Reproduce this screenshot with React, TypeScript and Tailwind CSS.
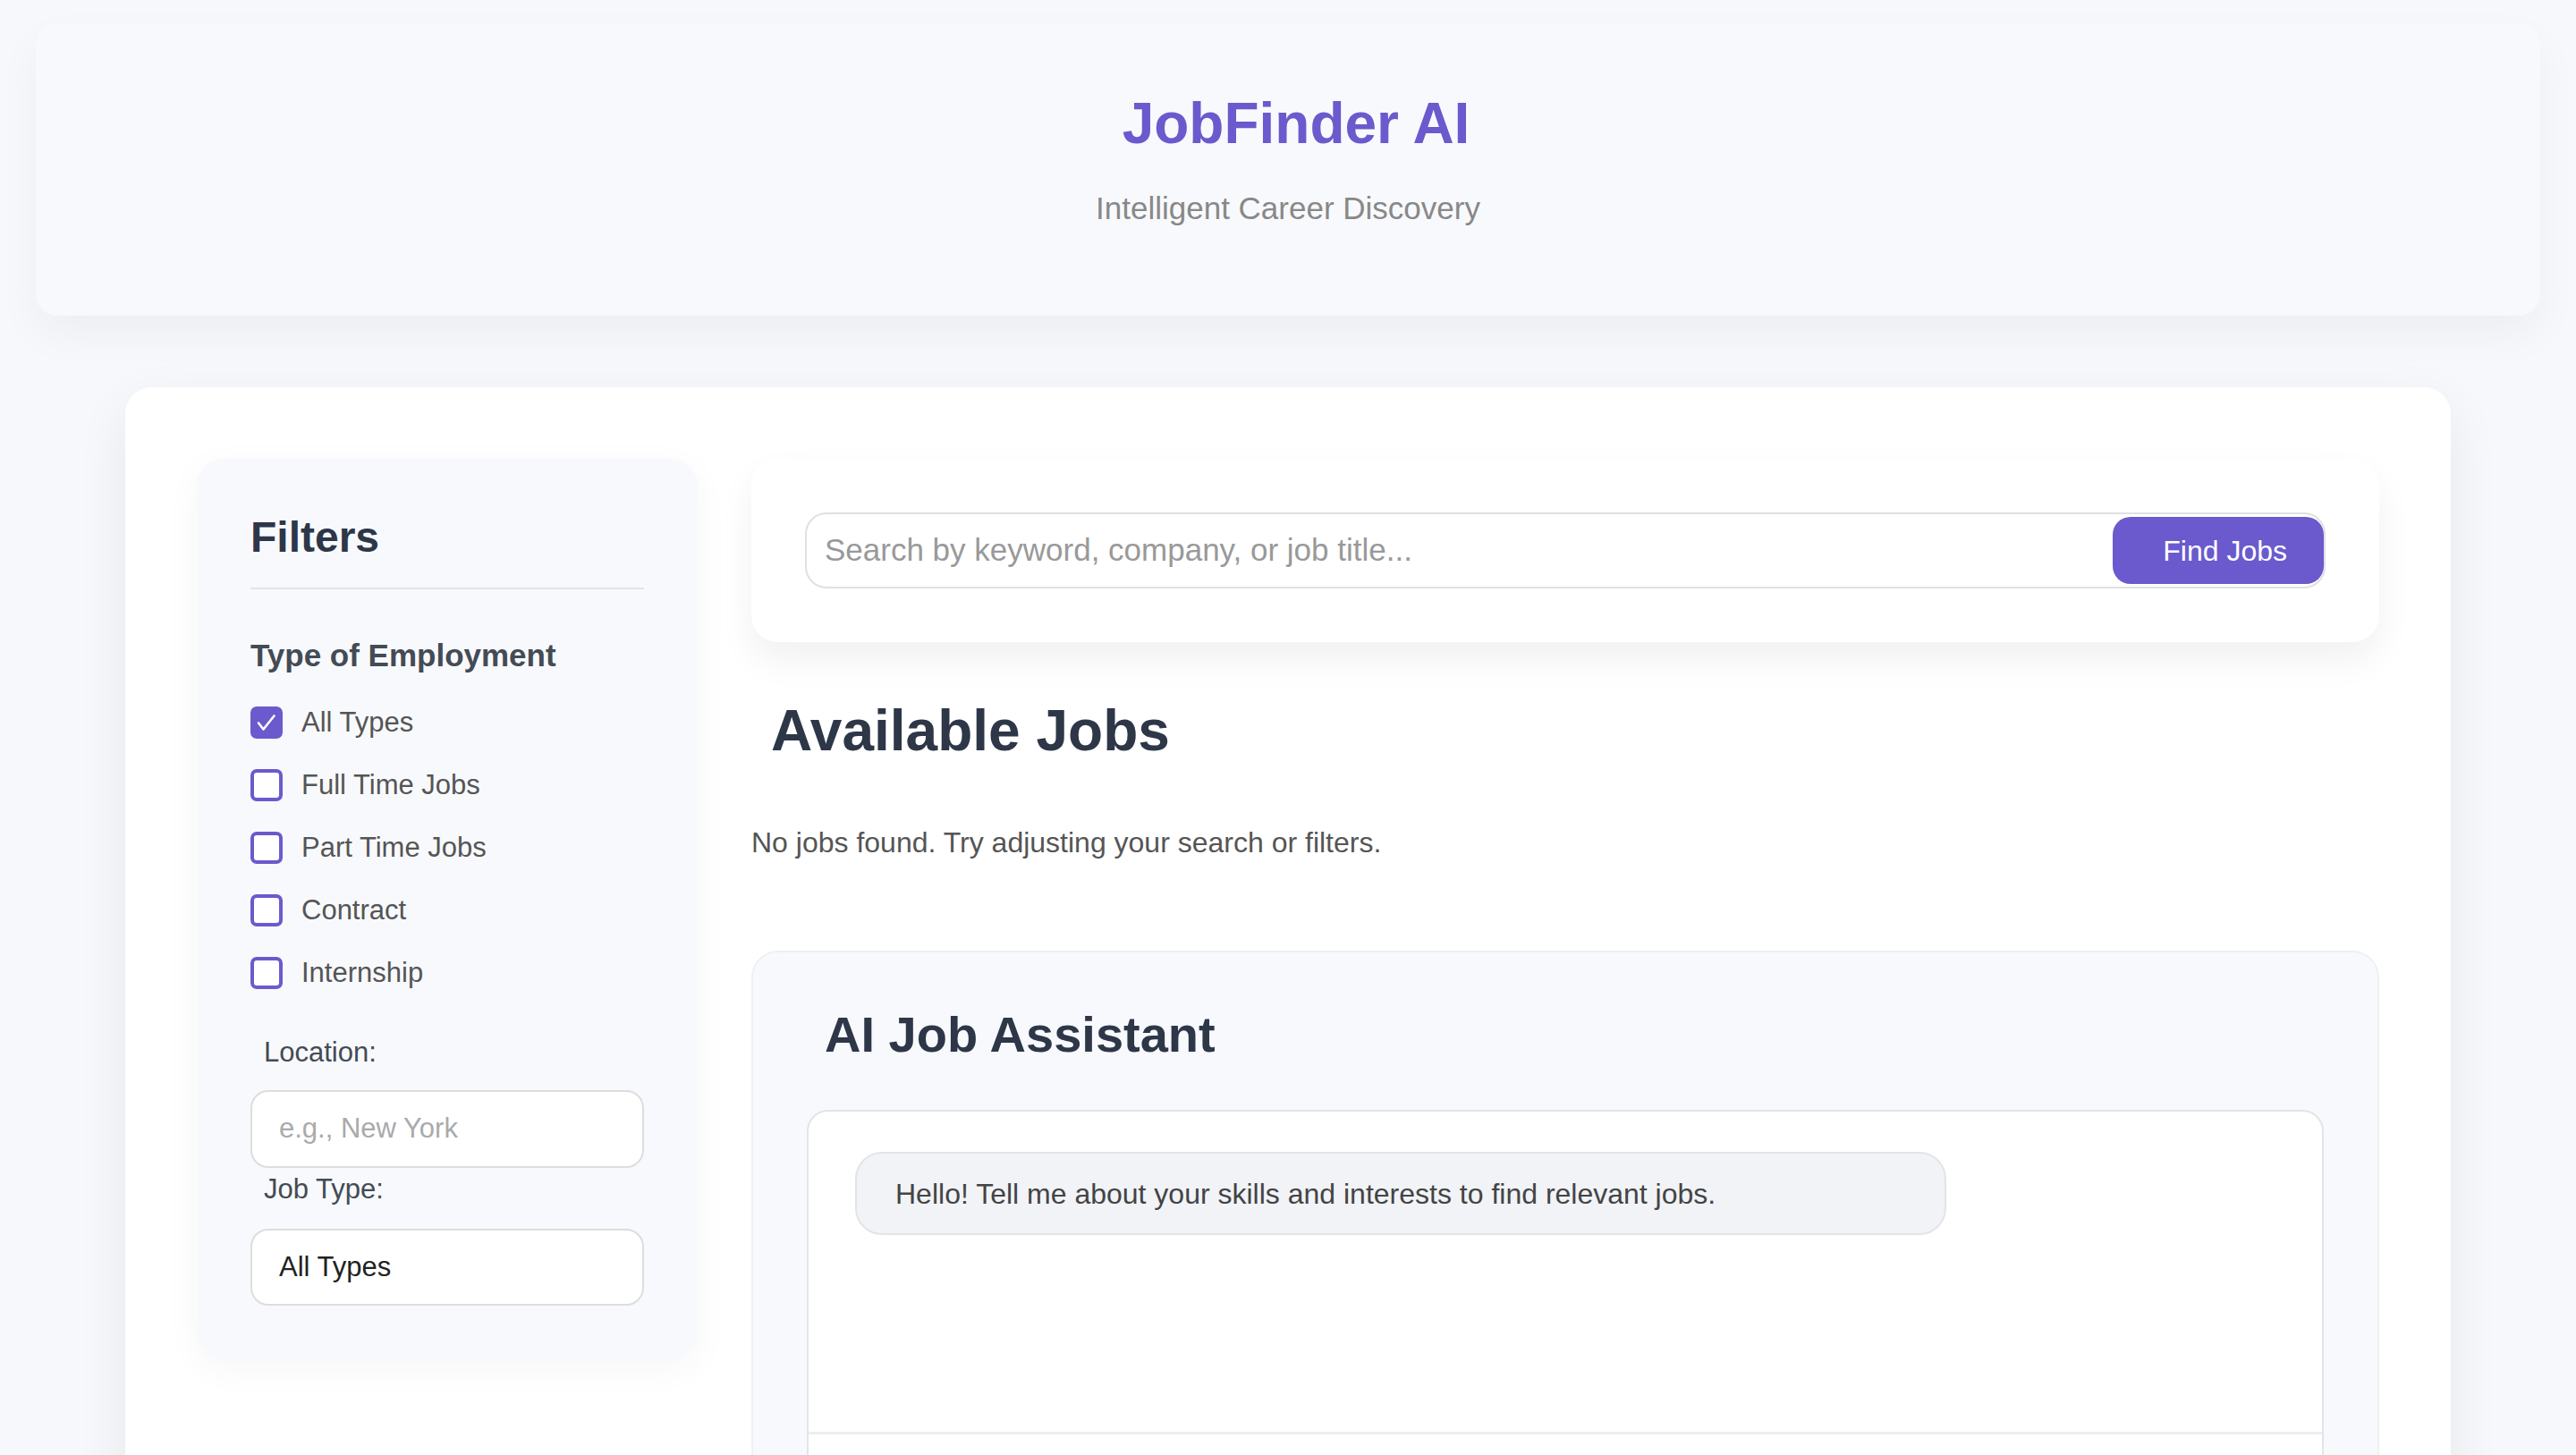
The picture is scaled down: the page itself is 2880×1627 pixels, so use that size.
import React from 'react';

const employmentTypes = [
    { label: 'All Types', checked: true },
    { label: 'Full Time Jobs', checked: false },
    { label: 'Part Time Jobs', checked: false },
    { label: 'Contract', checked: false },
    { label: 'Internship', checked: false },
];

function Checkbox({ checked }: { checked: boolean }) {
    if (checked) {
        return (
            <span className="w-[36px] h-[36px] rounded-[7px] bg-[#6a5acd] flex items-center justify-center shrink-0">
                <svg width="36" height="36" viewBox="0 0 36 36" fill="none" stroke="white" strokeWidth="2.6" strokeLinecap="round" strokeLinejoin="round">
                    <path d="M9 18.5l5.5 7L26.5 10.5" />
                </svg>
            </span>
        );
    }
    return <span className="w-[36px] h-[36px] rounded-[7px] border-[4px] border-[#6a5acd] bg-white shrink-0" />;
}

function Sidebar() {
    return (
        <aside className="w-[560px] shrink-0 bg-[#f8f9fc] rounded-[30px] p-[60px] shadow-[0_10px_40px_rgba(0,0,0,0.04)]">
            <h3 className="text-[48px] leading-[55px] font-bold text-[#2d3748] pb-[29px] border-b-2 border-[#e2e4e8]">Filters</h3>

            <h4 className="mt-[54px] text-[35px] leading-[40px] font-bold text-[#444b55]">Type of Employment</h4>
            <div className="mt-[37px] flex flex-col gap-[34px]">
                {employmentTypes.map((t) => (
                    <label key={t.label} className="h-[36px] flex items-center gap-[21px] text-[31px] text-[#555]">
                        <Checkbox checked={t.checked} />
                        <span>{t.label}</span>
                    </label>
                ))}
            </div>

            <div className="mt-[53px] pl-[15px] text-[31px] leading-[36px] text-[#444b55]">Location:</div>
            <div className="mt-[24px] h-[87px] border-2 border-[#dddddd] rounded-[20px] bg-white flex items-center px-[30px] text-[31px] text-[#aaaaaa]">
                e.g., New York
            </div>

            <div className="mt-[6px] pl-[15px] text-[31px] leading-[36px] text-[#444b55]">Job Type:</div>
            <div className="mt-[26px] h-[86px] border-2 border-[#dddddd] rounded-[20px] bg-white flex items-center px-[30px] text-[31px] text-[#222]">
                All Types
            </div>
        </aside>
    );
}

function SearchCard() {
    return (
        <div className="bg-white rounded-[30px] p-[60px] shadow-[0_20px_40px_rgba(0,0,0,0.06)]">
            <div className="h-[85px] border-2 border-[#e0e0e0] rounded-[24px] flex items-center">
                <span className="flex-1 pl-[20px] text-[35px] text-[#999]">Search by keyword, company, or job title...</span>
                <button className="h-[75px] pl-[56px] pr-[41px] rounded-[20px] bg-[#6a5acd] text-white text-[32px]">Find Jobs</button>
            </div>
        </div>
    );
}

function Assistant() {
    return (
        <div className="mt-[102px] bg-[#f8f9fc] border-2 border-[#eef0f5] rounded-[30px] px-[60px] pt-[60px] pb-[60px]">
            <h2 className="pl-[20px] text-[56px] leading-[64px] font-bold text-[#2d3748]">AI Job Assistant</h2>
            <div className="mt-[52px] bg-white border-2 border-[#e2e4e8] rounded-[24px] overflow-hidden">
                <div className="h-[358px] pt-[45px] pl-[52px]">
                    <div className="w-[1220px] h-[93px] bg-[#f1f3f7] border-2 border-[#e2e4e8] rounded-[30px] flex items-center pl-[43px] text-[32px] text-[#444]">
                        Hello! Tell me about your skills and interests to find relevant jobs.
                    </div>
                </div>
                {/* input row, below the fold */}
                <div className="border-t-[3px] border-[#eceef3] p-[30px] flex gap-[20px]">
                    <div className="flex-1 h-[85px] border-2 border-[#dddddd] rounded-[20px]" />
                    <div className="w-[160px] h-[85px] rounded-[20px] bg-[#6a5acd]" />
                </div>
            </div>
        </div>
    );
}

export default function App() {
    return (
        <div className="min-h-screen bg-[#f7f8fc] font-['Liberation_Sans',Arial,sans-serif] pt-[27px] pb-[80px]">
            {/* Header */}
            <header className="mx-[40px] h-[326px] bg-[#f8f9fc] rounded-[24px] shadow-[0_20px_50px_rgba(0,0,0,0.045)] flex flex-col items-center pt-[74px]">
                <h1 className="pl-[18px] text-[64px] leading-[74px] font-bold text-[#6a5acd]">JobFinder AI</h1>
                <p className="mt-[38px] text-[35px] leading-[40px] text-[#888]">Intelligent Career Discovery</p>
            </header>

            {/* Main card */}
            <main className="mx-auto mt-[80px] w-[2600px] bg-white rounded-[30px] p-[80px] shadow-[0_20px_60px_rgba(0,0,0,0.07)] flex items-start gap-[60px]">
                <Sidebar />
                <section className="flex-1 min-w-0">
                    <SearchCard />
                    <h2 className="mt-[62px] pl-[22px] text-[64px] leading-[74px] font-bold text-[#2d3748]">Available Jobs</h2>
                    <p className="mt-[70px] text-[32px] leading-[37px] text-[#555]">No jobs found. Try adjusting your search or filters.</p>
                    <Assistant />
                </section>
            </main>
        </div>
    );
}
